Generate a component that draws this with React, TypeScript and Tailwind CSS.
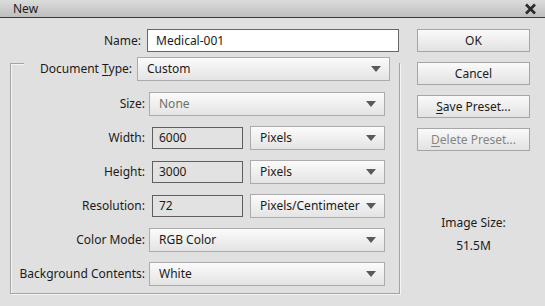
import React from 'react';

const Arrow = () => (
  <svg width="10" height="6" viewBox="0 0 10 6" className="shrink-0">
    <path d="M0 0 L10 0 L5 6 Z" fill="#5a5a5a" />
  </svg>
);

const Dropdown = ({ value, w, disabled }: { value: string; w: string; disabled?: boolean }) => (
  <div
    className={`${w} h-[24px] flex items-center justify-between pl-[9px] pr-[8px] border border-[#ababab] bg-gradient-to-b from-[#fbfbfb] to-[#e4e4e4] ${
      disabled ? 'text-[#6f6f6f]' : 'text-[#1b1b1b]'
    }`}
  >
    <span>{value}</span>
    <Arrow />
  </div>
);

const NumField = ({ value }: { value: string }) => (
  <div className="ml-[7px] w-[91px] h-[22px] flex items-center pl-[6px] border border-[#5e5e5e] bg-[#e2e2e2]">
    {value}
  </div>
);

const Button = ({ children, disabled }: { children: React.ReactNode; disabled?: boolean }) => (
  <div
    className={`h-[23px] flex items-center justify-center border border-[#a6a6a6] bg-gradient-to-b from-[#fafafa] to-[#e2e2e2] ${
      disabled ? 'text-[#858585]' : 'text-[#1b1b1b]'
    }`}
  >
    {children}
  </div>
);

const Row = ({ label, children }: { label: React.ReactNode; children: React.ReactNode }) => (
  <div className="flex items-center h-[24px]">
    <div className="w-[134px] text-right">{label}</div>
    {children}
  </div>
);

export default function App() {
  return (
    <div className="w-[545px] h-[306px] bg-[#e0e0e0] text-[12px] leading-[16px] text-[#1b1b1b] font-['Noto_Sans',sans-serif] overflow-hidden">
      {/* title bar */}
      <div className="h-[18px] flex items-center justify-between pl-[13px] pr-[8px] border-b border-[#3c3c3c] bg-gradient-to-b from-[#dcdcdc] to-[#bebebe]">
        <span className="text-[12px]">New</span>
        <svg width="13" height="12" viewBox="0 0 13 12">
          <path d="M2 1.5 L11 10.5 M11 1.5 L2 10.5" stroke="#2a2a2a" strokeWidth="2.6" />
        </svg>
      </div>

      <div className="flex">
        {/* left side */}
        <div className="w-[400px] pt-[11px]">
          <div className="flex items-center h-[23px]">
            <div className="w-[141px] text-right">Name:</div>
            <div className="ml-[6px] w-[252px] h-[23px] flex items-center pl-[8px] bg-white border border-[#666]">
              Medical-001
            </div>
          </div>

          <div className="mt-[11px] ml-[10px] w-[390px] border border-[#a4a4a4] shadow-[inset_1px_1px_0_#f4f4f4,1px_1px_0_#f4f4f4] pb-[7px]">
            <div className="-mt-[7px] ml-[13px] flex items-center h-[24px] bg-[#e0e0e0]">
              <div className="w-[108px] text-right">
                Document <span className="underline underline-offset-2">T</span>ype:
              </div>
              <div className="ml-[5px]">
                <Dropdown value="Custom" w="w-[253px]" />
              </div>
            </div>

            <div className="mt-[11px] flex flex-col gap-[10px]">
              <Row label="Size:">
                <div className="ml-[4px]">
                  <Dropdown value="None" w="w-[236px]" disabled />
                </div>
              </Row>
              <Row label="Width:">
                <NumField value="6000" />
                <div className="ml-[7px]">
                  <Dropdown value="Pixels" w="w-[135px]" />
                </div>
              </Row>
              <Row label="Height:">
                <NumField value="3000" />
                <div className="ml-[7px]">
                  <Dropdown value="Pixels" w="w-[135px]" />
                </div>
              </Row>
              <Row label="Resolution:">
                <NumField value="72" />
                <div className="ml-[7px]">
                  <Dropdown value="Pixels/Centimeter" w="w-[135px]" />
                </div>
              </Row>
              <Row label="Color Mode:">
                <div className="ml-[4px]">
                  <Dropdown value="RGB Color" w="w-[236px]" />
                </div>
              </Row>
              <Row label="Background Contents:">
                <div className="ml-[4px]">
                  <Dropdown value="White" w="w-[236px]" />
                </div>
              </Row>
            </div>
          </div>
        </div>

        {/* right side */}
        <div className="ml-[17px] w-[113px] pt-[11px] flex flex-col gap-[10px]">
          <Button>OK</Button>
          <Button>Cancel</Button>
          <Button>
            <span className="underline underline-offset-2">S</span>ave Preset...
          </Button>
          <Button disabled>
            <span className="underline underline-offset-2">D</span>elete Preset...
          </Button>
          <div className="mt-[54px] flex flex-col items-center gap-[7px]">
            <span>Image Size:</span>
            <span>51.5M</span>
          </div>
        </div>
      </div>
    </div>
  );
}
